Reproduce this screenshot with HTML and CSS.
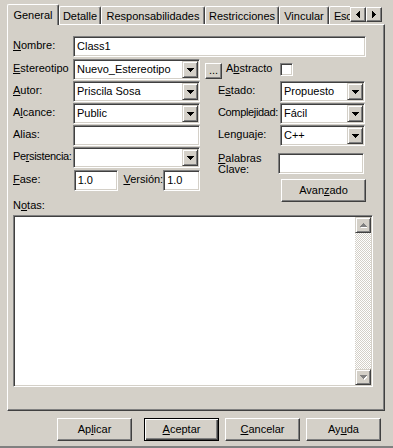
FILE: index.html
```html
<!DOCTYPE html>
<html lang="es">
<head>
<meta charset="utf-8">
<title>Propiedades de Class1</title>
<link rel="stylesheet" href="styles.css">
</head>
<body>
<div class="dialog">
  <div class="tabstrip">
    <div class="tabs">
      <div class="tab active t-general">General</div>
      <div class="tab t-detalle">Detalle</div>
      <div class="tab t-resp">Responsabilidades</div>
      <div class="tab t-restr">Restricciones</div>
      <div class="tab t-vinc">Vincular</div>
      <div class="tab t-esc">Esc</div>
    </div>
    <div class="tabscroll">
      <div class="sbtn"><svg width="4" height="7" viewBox="0 0 4 7"><path d="M3 0h1v7H3z M2 1h1v5H2z M1 2h1v3H1z M0 3h1v1H0z" fill="#000"/></svg></div>
      <div class="sbtn"><svg width="4" height="7" viewBox="0 0 4 7"><path d="M0 0h1v7H0z M1 1h1v5H1z M2 2h1v3H2z M3 3h1v1H3z" fill="#000"/></svg></div>
    </div>
  </div>

  <div class="panel">
    <div class="row r-nombre">
      <span class="lbl"><u>N</u>ombre:</span>
      <div class="field f-nombre"><span class="val">Class1</span></div>
    </div>

    <div class="row r-estereo">
      <span class="lbl"><u>E</u>stereotipo</span>
      <div class="field combo f-left"><span class="val">Nuevo_Estereotipo</span><span class="drop"><svg width="7" height="4" viewBox="0 0 7 4"><path d="M0 0h7v1H0z M1 1h5v1H1z M2 2h3v1H2z M3 3h1v1H3z" fill="#000"/></svg></span></div>
      <div class="btn dots">...</div>
      <span class="lbl lbl-abs">A<u>b</u>stracto</span>
      <div class="check"></div>
    </div>

    <div class="cols">
      <div class="col col-left">
        <div class="row">
          <span class="lbl"><u>A</u>utor:</span>
          <div class="field combo f-left"><span class="val">Priscila Sosa</span><span class="drop"><svg width="7" height="4" viewBox="0 0 7 4"><path d="M0 0h7v1H0z M1 1h5v1H1z M2 2h3v1H2z M3 3h1v1H3z" fill="#000"/></svg></span></div>
        </div>
        <div class="row">
          <span class="lbl">A<u>l</u>cance:</span>
          <div class="field combo f-left"><span class="val">Public</span><span class="drop"><svg width="7" height="4" viewBox="0 0 7 4"><path d="M0 0h7v1H0z M1 1h5v1H1z M2 2h3v1H2z M3 3h1v1H3z" fill="#000"/></svg></span></div>
        </div>
        <div class="row">
          <span class="lbl">Alias:</span>
          <div class="field f-left"><span class="val"></span></div>
        </div>
        <div class="row">
          <span class="lbl tight">Pe<u>r</u>sistencia:</span>
          <div class="field combo f-left"><span class="val"></span><span class="drop"><svg width="7" height="4" viewBox="0 0 7 4"><path d="M0 0h7v1H0z M1 1h5v1H1z M2 2h3v1H2z M3 3h1v1H3z" fill="#000"/></svg></span></div>
        </div>
        <div class="row r-fase">
          <span class="lbl lbl-fase"><u>F</u>ase:</span>
          <div class="field f-fase"><span class="val">1.0</span></div>
          <span class="lbl lbl-version"><u>V</u>ersión:</span>
          <div class="field f-version"><span class="val">1.0</span></div>
        </div>
        <div class="notas-lbl">N<u>o</u>tas:</div>
      </div>

      <div class="col col-right">
        <div class="row">
          <span class="lbl lbl-r">E<u>s</u>tado:</span>
          <div class="field combo f-right"><span class="val">Propuesto</span><span class="drop"><svg width="7" height="4" viewBox="0 0 7 4"><path d="M0 0h7v1H0z M1 1h5v1H1z M2 2h3v1H2z M3 3h1v1H3z" fill="#000"/></svg></span></div>
        </div>
        <div class="row">
          <span class="lbl lbl-r tight">Complejidad:</span>
          <div class="field combo f-right"><span class="val">Fácil</span><span class="drop"><svg width="7" height="4" viewBox="0 0 7 4"><path d="M0 0h7v1H0z M1 1h5v1H1z M2 2h3v1H2z M3 3h1v1H3z" fill="#000"/></svg></span></div>
        </div>
        <div class="row">
          <span class="lbl lbl-r">Lenguaje:</span>
          <div class="field combo f-right"><span class="val">C++</span><span class="drop"><svg width="7" height="4" viewBox="0 0 7 4"><path d="M0 0h7v1H0z M1 1h5v1H1z M2 2h3v1H2z M3 3h1v1H3z" fill="#000"/></svg></span></div>
        </div>
        <div class="row r-palabras">
          <span class="lbl-two"><u>P</u>alabras<br>Clave:</span>
          <div class="field f-palabras"><span class="val"></span></div>
        </div>
        <div class="btn avanzado">Avan<u>z</u>ado</div>
      </div>
    </div>

    <div class="notes">
      <div class="notes-text"></div>
      <div class="vscroll">
        <div class="sarrow"><svg width="7" height="5" viewBox="0 0 7 5"><path d="M4 1h1v1H4z M5 2h1v1H5z M6 3h1v1H6z M1 4h7v1H1z" fill="#fff"/><path d="M3 0h1v1H3z M2 1h3v1H2z M1 2h5v1H1z M0 3h7v1H0z" fill="#808080"/></svg></div>
        <div class="track"></div>
        <div class="sarrow"><svg width="7" height="5" viewBox="0 0 7 5"><path d="M1 1h7v1H1z M2 2h5v1H2z M3 3h3v1H3z M4 4h1v1H4z" fill="#fff"/><path d="M0 0h7v1H0z M1 1h5v1H1z M2 2h3v1H2z M3 3h1v1H3z" fill="#808080"/></svg></div>
      </div>
    </div>
  </div>

  <div class="buttons">
    <div class="btn dlg-btn b-aplicar">Ap<u>l</u>icar</div>
    <div class="btn dlg-btn default"><u>A</u>ceptar</div>
    <div class="btn dlg-btn"><u>C</u>ancelar</div>
    <div class="btn dlg-btn">Ay<u>u</u>da</div>
  </div>
</div>
</body>
</html>
```

FILE: styles.css
```css
* { box-sizing: border-box; }

html, body {
  margin: 0;
  padding: 0;
}

body {
  width: 393px;
  height: 448px;
  overflow: hidden;
  background: #d4d0c8;
  font-family: "Liberation Sans", Arial, sans-serif;
  font-size: 11px;
  color: #000;
}

u {
  text-decoration: underline;
  text-underline-offset: 1px;
}

.dialog {
  width: 393px;
  height: 448px;
  display: flex;
  flex-direction: column;
  border-bottom: 2px solid #808080;
}

/* ---------- tabs ---------- */
.tabstrip {
  display: flex;
  height: 24px;
  padding-top: 4px;
}

.tabs {
  display: flex;
  align-items: flex-end;
  width: 343px;
  height: 20px;
  margin-left: 7px;
}

.tab {
  height: 18px;
  padding-top: 3px;
  line-height: 13px;
  text-align: center;
  white-space: nowrap;
  border-top: 1px solid #fff;
  border-left: 1px solid #fff;
  border-right: 1px solid #404040;
  box-shadow: inset -1px 0 0 #808080;
  border-top-left-radius: 2px;
  border-top-right-radius: 2px;
  background: #d4d0c8;
}

.tab.active {
  height: 21px;
  padding-top: 4px;
  margin-bottom: -1px;
  position: relative;
  z-index: 1;
}

.t-general { width: 52px; }
.t-detalle { width: 42px; }
.t-resp { width: 104px; }
.t-restr { width: 74px; }
.t-vinc { width: 50px; }
.t-esc {
  width: 21px;
  text-align: left;
  padding-left: 4px;
  letter-spacing: -0.3px;
  border-right: none;
  box-shadow: none;
  border-top-right-radius: 0;
}

.tabscroll {
  display: flex;
  margin-top: 3px;
}

.sbtn {
  width: 16px;
  height: 15px;
  display: flex;
  align-items: center;
  justify-content: center;
  border: 1px solid;
  border-color: #fff #404040 #404040 #fff;
  box-shadow: inset -1px -1px 0 #808080;
  background: #d4d0c8;
}

/* ---------- panel ---------- */
.panel {
  margin-left: 7px;
  width: 378px;
  height: 387px;
  border: 1px solid;
  border-color: #fff #404040 #404040 #fff;
  box-shadow: inset -1px -1px 0 #808080;
  padding: 11px 0 0 5px;
}

.row {
  display: flex;
  height: 21px;
}

.lbl {
  width: 60px;
  line-height: 19px;
  white-space: nowrap;
}

.tight { letter-spacing: -0.35px; }

.r-nombre { margin-bottom: 2px; }

.field {
  height: 21px;
  background: #fff;
  border: 1px solid;
  border-color: #808080 #fff #fff #808080;
  box-shadow: inset 1px 1px 0 #404040, inset -1px -1px 0 #d4d0c8;
  padding: 1px;
  display: flex;
}

.field .val {
  flex: 1;
  padding-left: 2px;
  line-height: 17px;
  white-space: nowrap;
  overflow: hidden;
}

.f-nombre { width: 293px; }
.f-left { width: 127px; }
.f-right { width: 85px; }

.drop {
  width: 16px;
  height: 17px;
  display: flex;
  align-items: center;
  justify-content: center;
  background: #d4d0c8;
  border: 1px solid;
  border-color: #d4d0c8 #404040 #404040 #d4d0c8;
  box-shadow: inset 1px 1px 0 #fff, inset -1px -1px 0 #808080;
}

.btn {
  background: #d4d0c8;
  border: 1px solid;
  border-color: #fff #404040 #404040 #fff;
  box-shadow: inset -1px -1px 0 #808080;
  text-align: center;
  white-space: nowrap;
}

.dots {
  width: 17px;
  height: 16px;
  margin: 4px 0 0 5px;
  line-height: 12px;
}

.lbl-abs {
  width: 54px;
  margin-left: 4px;
}

.check {
  width: 13px;
  height: 13px;
  margin-top: 4px;
  background: #fff;
  border: 1px solid;
  border-color: #808080 #fff #fff #808080;
  box-shadow: inset 1px 1px 0 #404040, inset -1px -1px 0 #d4d0c8;
}

/* ---------- columns ---------- */
.cols {
  display: flex;
  margin-top: 1px;
}

.col {
  display: flex;
  flex-direction: column;
  gap: 1px;
}

.col-left { width: 187px; }

.col-right {
  width: 148px;
  margin-left: 18px;
}

.r-fase { margin-top: 1px; }
.lbl-fase { width: 61px; }
.f-fase { width: 45px; }
.lbl-version {
  width: 40px;
  margin-left: 5px;
}
.f-version { width: 37px; }

.notas-lbl {
  margin-top: 7px;
  line-height: 13px;
  height: 13px;
}

.lbl-r { width: 62px; }

.r-palabras {
  margin-top: 6px;
}

.lbl-two {
  width: 60px;
  line-height: 11px;
}

.f-palabras { width: 86px; }

.avanzado {
  width: 85px;
  height: 23px;
  margin: 4px 0 0 63px;
  line-height: 21px;
}

/* ---------- notes ---------- */
.notes {
  margin-top: 3px;
  width: 360px;
  height: 172px;
  background: #fff;
  border: 1px solid;
  border-color: #808080 #fff #fff #808080;
  box-shadow: inset 1px 1px 0 #404040, inset -1px -1px 0 #d4d0c8;
  padding: 1px;
  display: flex;
}

.notes-text { flex: 1; }

.vscroll {
  width: 16px;
  display: flex;
  flex-direction: column;
}

.sarrow {
  width: 16px;
  height: 16px;
  display: flex;
  align-items: center;
  justify-content: center;
  background: #d4d0c8;
  border: 1px solid;
  border-color: #d4d0c8 #404040 #404040 #d4d0c8;
  box-shadow: inset 1px 1px 0 #fff, inset -1px -1px 0 #808080;
}

.track {
  flex: 1;
  background: repeating-conic-gradient(#fff 0 25%, #d4d0c8 0 50%) 0 0 / 2px 2px;
}

/* ---------- dialog buttons ---------- */
.buttons {
  display: flex;
  justify-content: flex-end;
  gap: 6px;
  margin-top: 7px;
  padding-right: 12px;
}

.dlg-btn {
  width: 75px;
  height: 23px;
  line-height: 21px;
}

.b-aplicar { margin-right: 6px; }

.dlg-btn.default {
  border-color: #000;
  box-shadow: inset 1px 1px 0 #fff, inset -1px -1px 0 #404040, inset -2px -2px 0 #808080;
}
```
